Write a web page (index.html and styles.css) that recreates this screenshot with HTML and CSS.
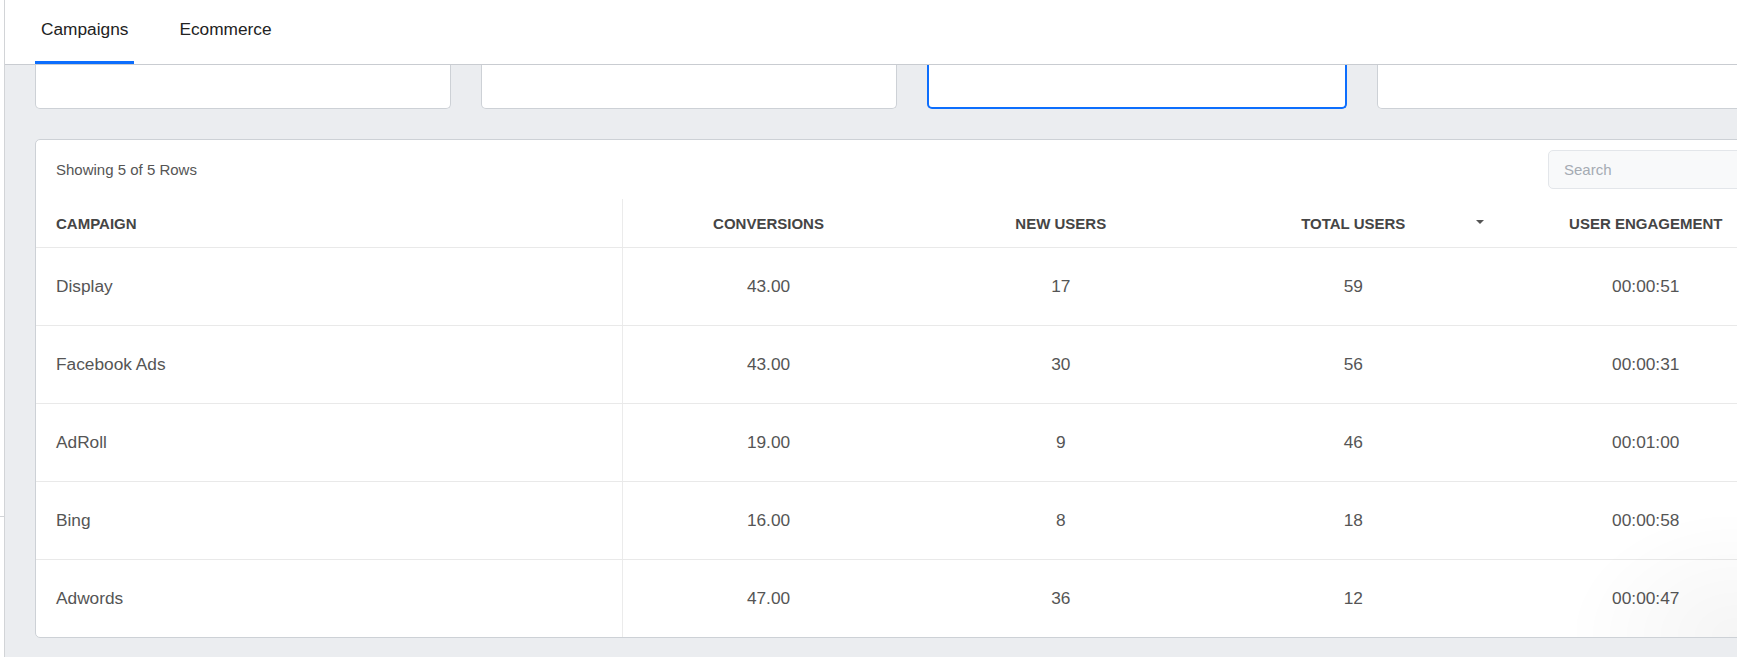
FILE: index.html
```html
<!DOCTYPE html>
<html lang="en">
<head>
<meta charset="utf-8">
<title>Campaigns</title>
<link rel="stylesheet" href="styles.css">
</head>
<body>
<div class="app">
  <aside class="sidebar"><div class="sidebar-mark"></div></aside>
  <main class="main">
    <nav class="tabs">
      <a class="tab active">Campaigns</a>
      <a class="tab">Ecommerce</a>
    </nav>
    <section class="content">
      <div class="cards">
        <div class="card"></div>
        <div class="card"></div>
        <div class="card selected"></div>
        <div class="card"></div>
      </div>
      <div class="table-card">
        <div class="toolbar">
          <span class="count">Showing 5 of 5 Rows</span>
          <input class="search" type="text" placeholder="Search">
        </div>
        <table class="data">
          <colgroup>
            <col class="c-first"><col class="c-num"><col class="c-num"><col class="c-num"><col class="c-num">
          </colgroup>
          <thead>
            <tr>
              <th class="left">CAMPAIGN</th>
              <th>CONVERSIONS</th>
              <th>NEW USERS</th>
              <th class="sorted">TOTAL USERS<span class="sort-arrow"></span></th>
              <th>USER ENGAGEMENT</th>
            </tr>
          </thead>
          <tbody>
            <tr><td class="left">Display</td><td>43.00</td><td>17</td><td>59</td><td>00:00:51</td></tr>
            <tr><td class="left">Facebook Ads</td><td>43.00</td><td>30</td><td>56</td><td>00:00:31</td></tr>
            <tr><td class="left">AdRoll</td><td>19.00</td><td>9</td><td>46</td><td>00:01:00</td></tr>
            <tr><td class="left">Bing</td><td>16.00</td><td>8</td><td>18</td><td>00:00:58</td></tr>
            <tr><td class="left">Adwords</td><td>47.00</td><td>36</td><td>12</td><td>00:00:47</td></tr>
          </tbody>
        </table>
      </div>
    </section>
  </main>
</div>
<div class="corner-shade"></div>
</body>
</html>
```
FILE: styles.css
```css
html, body {
  margin: 0;
  padding: 0;
  background: #ffffff;
  overflow: hidden;
  height: 657px;
  font-family: "Liberation Sans", Arial, sans-serif;
  color: #555555;
}

.app {
  display: flex;
  height: 657px;
}

.sidebar {
  flex: 0 0 4px;
  background: #ffffff;
  border-right: 1px solid #d2d4d7;
}

.sidebar-mark {
  height: 516px;
  border-bottom: 1px solid #d2d4d7;
}

.main {
  flex: 0 0 auto;
  width: 1820px;
  background: #ebedf0;
  display: flex;
  flex-direction: column;
}

.tabs {
  height: 64px;
  background: #ffffff;
  border-bottom: 1px solid #c9ccd1;
  display: flex;
  align-items: stretch;
  padding-left: 30px;
  gap: 39px;
}

.tab {
  display: flex;
  align-items: center;
  padding: 0 6px 3px;
  font-size: 17.3px;
  color: #222222;
  border-bottom: 3px solid transparent;
  box-sizing: border-box;
  height: 64px;
  margin-bottom: -1px;
}

.tab.active {
  border-bottom-color: #0d6efd;
}

.content {
  padding: 0 30px;
  display: flex;
  flex-direction: column;
  gap: 30px;
}

.cards {
  display: grid;
  grid-template-columns: 416px 416px 420px 416px;
  column-gap: 30px;
  width: 1758px;
}

.card {
  height: 43px;
  background: #ffffff;
  border: 1px solid #cdd1d6;
  border-top: 0;
  border-radius: 0 0 5px 5px;
}

.card.selected {
  border: 2px solid #0d6efd;
  border-top: 0;
  height: 42px;
}

.table-card {
  width: 1756px;
  background: #ffffff;
  border: 1px solid #cdd1d6;
  border-radius: 5px;
}

.toolbar {
  display: flex;
  align-items: center;
  justify-content: space-between;
  padding: 10px 20px 10px;
}

.count {
  font-size: 15px;
  color: #555555;
}

.search {
  width: 224px;
  height: 39px;
  box-sizing: border-box;
  border: 1px solid #e3e6ea;
  border-radius: 5px;
  background: #f8f9fa;
  padding: 0 15px;
  font-family: "Liberation Sans", Arial, sans-serif;
  font-size: 15px;
  color: #555555;
  outline: none;
}

.search::placeholder {
  color: #a5abb3;
}

.data {
  width: 1756px;
  border-collapse: collapse;
  table-layout: fixed;
}

.c-first { width: 586px; }
.c-num { width: 292.5px; }

.data th {
  height: 48px;
  padding: 0 20px;
  font-size: 15px;
  font-weight: bold;
  color: #454545;
  text-align: center;
  border-bottom: 1px solid #e9e9e9;
  white-space: nowrap;
}

.data td {
  height: 77px;
  padding: 0 20px;
  font-size: 17.3px;
  color: #555555;
  text-align: center;
  border-bottom: 1px solid #e9e9e9;
}

.data tbody tr:last-child td {
  border-bottom: 0;
}

.data .left {
  text-align: left;
  border-right: 1px solid #ebebeb;
}

.data th.sorted {
  position: relative;
}

.sort-arrow {
  position: absolute;
  right: 16px;
  top: 21px;
  width: 0;
  height: 0;
  border-left: 4px solid transparent;
  border-right: 4px solid transparent;
  border-top: 4px solid #555555;
}

.corner-shade {
  position: fixed;
  right: 0;
  bottom: 20px;
  width: 160px;
  height: 120px;
  background: radial-gradient(ellipse at 100% 100%, rgba(0, 0, 0, 0.04), rgba(0, 0, 0, 0) 75%);
  pointer-events: none;
}
```
